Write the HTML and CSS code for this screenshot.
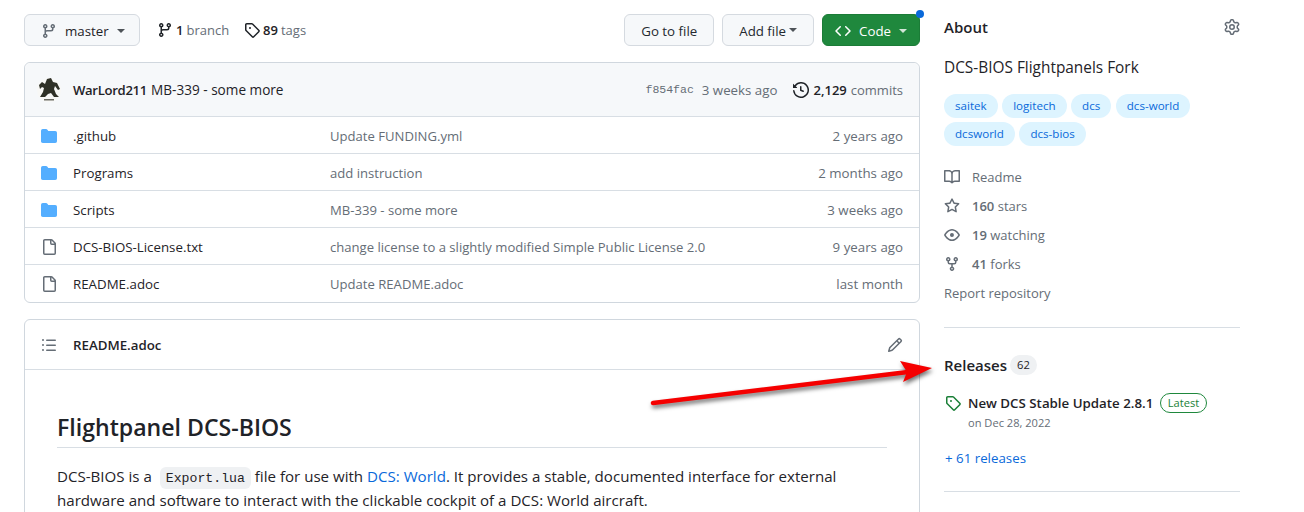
FILE: index.html

```html
<!DOCTYPE html>
<html lang="en">
<head>
    <meta charset="UTF-8">
    <title>DCS-BIOS Flightpanels Fork</title>
    <link rel="stylesheet" href="styles.css">
</head>
<body>
    <svg class="defs" width="0" height="0">
        <symbol id="i-branch" viewBox="0 0 16 16"><path d="M9.5 3.25a2.25 2.25 0 1 1 3 2.122V6A2.5 2.5 0 0 1 10 8.5H6a1 1 0 0 0-1 1v1.128a2.251 2.251 0 1 1-1.5 0V5.372a2.25 2.25 0 1 1 1.5 0v1.836A2.493 2.493 0 0 1 6 7h4a1 1 0 0 0 1-1v-.628A2.25 2.25 0 0 1 9.5 3.25Zm-6 0a.75.75 0 1 0 1.5 0 .75.75 0 0 0-1.5 0Zm8.25-.75a.75.75 0 1 0 0 1.5.75.75 0 0 0 0-1.5ZM4.25 12a.75.75 0 1 0 0 1.5.75.75 0 0 0 0-1.5Z"/></symbol>
        <symbol id="i-tag" viewBox="0 0 16 16"><path d="M1 7.775V2.75C1 1.784 1.784 1 2.75 1h5.025c.464 0 .91.184 1.238.513l6.25 6.25a1.75 1.75 0 0 1 0 2.474l-5.026 5.026a1.75 1.75 0 0 1-2.474 0l-6.25-6.25A1.752 1.752 0 0 1 1 7.775Zm1.5 0c0 .066.026.13.073.177l6.25 6.25a.25.25 0 0 0 .354 0l5.025-5.025a.25.25 0 0 0 0-.354l-6.25-6.25a.25.25 0 0 0-.177-.073H2.75a.25.25 0 0 0-.25.25ZM6 5a1 1 0 1 1 0 2 1 1 0 0 1 0-2Z"/></symbol>
        <symbol id="i-folder" viewBox="0 0 16 16"><path d="M1.75 1A1.75 1.75 0 0 0 0 2.75v10.5C0 14.216.784 15 1.75 15h12.5A1.75 1.75 0 0 0 16 13.25v-8.5A1.75 1.75 0 0 0 14.25 3H7.5a.25.25 0 0 1-.2-.1l-.9-1.2C6.07 1.26 5.55 1 5 1H1.75Z"/></symbol>
        <symbol id="i-file" viewBox="0 0 16 16"><path d="M2 1.75C2 .784 2.784 0 3.75 0h6.586c.464 0 .909.184 1.237.513l2.914 2.914c.329.328.513.773.513 1.237v9.586A1.75 1.75 0 0 1 13.25 16h-9.5A1.75 1.75 0 0 1 2 14.25Zm1.75-.25a.25.25 0 0 0-.25.25v12.5c0 .138.112.25.25.25h9.5a.25.25 0 0 0 .25-.25V6h-2.75A1.75 1.75 0 0 1 9 4.25V1.5Zm6.75.062V4.25c0 .138.112.25.25.25h2.688l-.011-.013-2.914-2.914-.013-.011Z"/></symbol>
    </svg>

    <div class="page">
        <div class="main">
            <div class="topbar">
                <button class="btn branch-btn">
                    <svg class="icon muted-icon"><use href="#i-branch"/></svg>
                    <span class="branch-name">master</span>
                    <span class="caret"></span>
                </button>
                <a class="meta-link"><svg class="icon"><use href="#i-branch"/></svg><b>1</b><span>branch</span></a>
                <a class="meta-link tags-link"><svg class="icon"><use href="#i-tag"/></svg><b>89</b><span>tags</span></a>
                <div class="spacer"></div>
                <button class="btn">Go to file</button>
                <button class="btn">Add file<span class="caret tight"></span></button>
                <button class="btn btn-green">
                    <svg class="icon" viewBox="0 0 16 16"><path d="m11.28 3.22 4.25 4.25a.75.75 0 0 1 0 1.06l-4.25 4.25a.749.749 0 0 1-1.275-.326.749.749 0 0 1 .215-.734L13.94 8l-3.72-3.72a.749.749 0 0 1 .326-1.275.749.749 0 0 1 .734.215Zm-6.56 0a.751.751 0 0 1 1.042.018.751.751 0 0 1 .018 1.042L2.06 8l3.72 3.72a.749.749 0 0 1-.326 1.275.749.749 0 0 1-.734-.215L.47 8.53a.75.75 0 0 1 0-1.06Z"/></svg>
                    <span>Code</span>
                    <span class="caret"></span>
                    <span class="dot"></span>
                </button>
            </div>

            <div class="box files">
                <div class="commit-head">
                    <svg class="avatar" viewBox="0 0 24 26">
                        <circle cx="12" cy="13" r="12" fill="#f8f8f6"/>
                        <path d="M2 8l3-3 3 2 2-5 4-1 2 4 4 1 3 6-2 1-3-4-1 3 2 5 3 3h-5l-3-4-3 1-3 3H3l3-5 1-4-2-1-2 2z" fill="#2f3127"/>
                        <rect x="7" y="22" width="10" height="1.5" fill="#6a6a62"/>
                    </svg>
                    <a class="author">WarLord211</a>
                    <span class="commit-msg">MB-339 - some more</span>
                    <div class="spacer"></div>
                    <code class="sha">f854fac</code>
                    <span class="commit-age">3 weeks ago</span>
                    <a class="commits">
                        <svg class="icon" viewBox="0 0 16 16"><path d="m.427 1.927 1.215 1.215a8.002 8.002 0 1 1-1.6 5.685.75.75 0 1 1 1.493-.154 6.5 6.5 0 1 0 1.18-4.458l1.358 1.358A.25.25 0 0 1 3.896 6H.25A.25.25 0 0 1 0 5.75V2.104a.25.25 0 0 1 .427-.177ZM7.75 4a.75.75 0 0 1 .75.75v2.992l2.028.812a.75.75 0 0 1-.557 1.392l-2.5-1A.751.751 0 0 1 7 8.25v-3.5A.75.75 0 0 1 7.75 4Z"/></svg>
                        <b>2,129</b><span>commits</span>
                    </a>
                </div>
                <div class="row">
                    <svg class="icon folder"><use href="#i-folder"/></svg>
                    <span class="name">.github</span>
                    <span class="msg">Update FUNDING.yml</span>
                    <span class="age">2 years ago</span>
                </div>
                <div class="row">
                    <svg class="icon folder"><use href="#i-folder"/></svg>
                    <span class="name">Programs</span>
                    <span class="msg">add instruction</span>
                    <span class="age">2 months ago</span>
                </div>
                <div class="row">
                    <svg class="icon folder"><use href="#i-folder"/></svg>
                    <span class="name">Scripts</span>
                    <span class="msg">MB-339 - some more</span>
                    <span class="age">3 weeks ago</span>
                </div>
                <div class="row">
                    <svg class="icon file"><use href="#i-file"/></svg>
                    <span class="name">DCS-BIOS-License.txt</span>
                    <span class="msg">change license to a slightly modified Simple Public License 2.0</span>
                    <span class="age">9 years ago</span>
                </div>
                <div class="row">
                    <svg class="icon file"><use href="#i-file"/></svg>
                    <span class="name">README.adoc</span>
                    <span class="msg">Update README.adoc</span>
                    <span class="age">last month</span>
                </div>
            </div>

            <div class="box readme">
                <div class="readme-head">
                    <svg class="icon file" viewBox="0 0 16 16"><path d="M5.75 2.5h8.5a.75.75 0 0 1 0 1.5h-8.5a.75.75 0 0 1 0-1.5Zm0 5h8.5a.75.75 0 0 1 0 1.5h-8.5a.75.75 0 0 1 0-1.5Zm0 5h8.5a.75.75 0 0 1 0 1.5h-8.5a.75.75 0 0 1 0-1.5ZM2 14a1 1 0 1 1 0-2 1 1 0 0 1 0 2Zm1-6a1 1 0 1 1-2 0 1 1 0 0 1 2 0ZM2 4a1 1 0 1 1 0-2 1 1 0 0 1 0 2Z"/></svg>
                    <span class="readme-name">README.adoc</span>
                    <div class="spacer"></div>
                    <svg class="icon file" viewBox="0 0 16 16"><path d="M11.013 1.427a1.75 1.75 0 0 1 2.474 0l1.086 1.086a1.75 1.75 0 0 1 0 2.474l-8.61 8.61c-.21.21-.47.364-.756.445l-3.251.93a.75.75 0 0 1-.927-.928l.929-3.25c.081-.286.235-.547.445-.758l8.61-8.61Zm.176 4.823L9.75 4.81l-6.286 6.287a.253.253 0 0 0-.064.108l-.558 1.953 1.953-.558a.253.253 0 0 0 .108-.064Zm1.238-3.763a.25.25 0 0 0-.354 0L10.811 3.75l1.439 1.44 1.263-1.263a.25.25 0 0 0 0-.354Z"/></svg>
                </div>
                <div class="markdown">
                    <h1>Flightpanel DCS-BIOS</h1>
                    <p>DCS-BIOS is a <code>Export.lua</code> file for use with <a>DCS: World</a>. It provides a stable, documented interface for external hardware and software to interact with the clickable cockpit of a DCS: World aircraft.</p>
                </div>
            </div>
        </div>

        <div class="side">
            <div class="about-head">
                <h2>About</h2>
                <svg class="icon file" viewBox="0 0 16 16"><path d="M8 0a8.2 8.2 0 0 1 .701.031C9.444.095 9.99.645 10.16 1.29l.288 1.107c.018.066.079.158.212.224.231.114.454.243.668.386.123.082.233.09.299.071l1.103-.303c.644-.176 1.392.021 1.82.63.27.385.506.792.704 1.218.315.675.111 1.422-.364 1.891l-.814.806c-.049.048-.098.147-.088.294.016.257.016.515 0 .772-.01.147.038.246.088.294l.814.806c.475.469.679 1.216.364 1.891a7.977 7.977 0 0 1-.704 1.217c-.428.61-1.176.807-1.82.63l-1.102-.302c-.067-.019-.177-.011-.3.071a5.909 5.909 0 0 1-.668.386c-.133.066-.194.158-.211.224l-.29 1.106c-.168.646-.715 1.196-1.458 1.26a8.006 8.006 0 0 1-1.402 0c-.743-.064-1.289-.614-1.458-1.26l-.289-1.106c-.018-.066-.079-.158-.212-.224a5.738 5.738 0 0 1-.668-.386c-.123-.082-.233-.09-.299-.071l-1.103.303c-.644.176-1.392-.021-1.82-.63a8.12 8.12 0 0 1-.704-1.218c-.315-.675-.111-1.422.363-1.891l.815-.806c.05-.048.098-.147.088-.294a6.214 6.214 0 0 1 0-.772c.01-.147-.038-.246-.088-.294l-.815-.806C.635 6.045.431 5.298.746 4.623a7.92 7.92 0 0 1 .704-1.217c.428-.61 1.176-.807 1.82-.63l1.102.302c.067.019.177.011.3-.071.214-.143.437-.272.668-.386.133-.066.194-.158.211-.224l.29-1.106C6.009.645 6.556.095 7.299.03 7.53.01 7.764 0 8 0Zm-.571 1.525c-.036.003-.108.036-.137.146l-.289 1.105c-.147.561-.549.967-.998 1.189-.173.086-.34.183-.5.29-.417.278-.97.423-1.529.27l-1.103-.303c-.109-.03-.175.016-.195.045-.22.312-.412.644-.573.99-.014.031-.021.11.059.19l.815.806c.411.406.562.957.53 1.456a4.709 4.709 0 0 0 0 .582c.032.499-.119 1.05-.53 1.456l-.815.806c-.081.08-.073.159-.059.19.162.346.353.677.573.989.02.03.085.076.195.046l1.102-.303c.56-.153 1.113-.008 1.53.27.161.107.328.204.501.29.447.222.85.629.997 1.189l.289 1.105c.029.109.101.143.137.146a6.6 6.6 0 0 0 1.142 0c.036-.003.108-.036.137-.146l.289-1.105c.147-.561.549-.967.998-1.189.173-.086.34-.183.5-.29.417-.278.97-.423 1.529-.27l1.103.303c.109.029.175-.016.195-.045.22-.313.411-.644.573-.99.014-.031.021-.11-.059-.19l-.815-.806c-.411-.406-.562-.957-.53-1.456a4.709 4.709 0 0 0 0-.582c-.032-.499.119-1.05.53-1.456l.815-.806c.081-.08.073-.159.059-.19a6.464 6.464 0 0 0-.573-.989c-.02-.03-.085-.076-.195-.046l-1.102.303c-.56.153-1.113.008-1.53-.27a4.44 4.44 0 0 0-.501-.29c-.447-.222-.85-.629-.997-1.189l-.289-1.105c-.029-.11-.101-.143-.137-.146a6.6 6.6 0 0 0-1.142 0ZM11 8a3 3 0 1 1-6 0 3 3 0 0 1 6 0ZM9.5 8a1.5 1.5 0 1 0-3.001.001A1.5 1.5 0 0 0 9.5 8Z"/></svg>
            </div>
            <p class="desc">DCS-BIOS Flightpanels Fork</p>
            <div class="topics">
                <a class="topic">saitek</a>
                <a class="topic">logitech</a>
                <a class="topic">dcs</a>
                <a class="topic">dcs-world</a>
                <a class="topic">dcsworld</a>
                <a class="topic">dcs-bios</a>
            </div>
            <ul class="stats">
                <li><svg class="icon file" viewBox="0 0 16 16"><path d="M0 1.75A.75.75 0 0 1 .75 1h4.253c1.227 0 2.317.59 3 1.501A3.743 3.743 0 0 1 11.006 1h4.245a.75.75 0 0 1 .75.75v10.5a.75.75 0 0 1-.75.75h-4.507a2.25 2.25 0 0 0-1.591.659l-.622.621a.75.75 0 0 1-1.06 0l-.622-.621A2.25 2.25 0 0 0 5.258 13H.75a.75.75 0 0 1-.75-.75Zm7.251 10.324.004-5.073-.002-2.253A2.25 2.25 0 0 0 5.003 2.5H1.5v9h3.757a3.75 3.75 0 0 1 1.994.574ZM8.755 4.75l-.004 7.322a3.752 3.752 0 0 1 1.992-.572H14.5v-9h-3.495a2.25 2.25 0 0 0-2.25 2.25Z"/></svg>Readme</li>
                <li><svg class="icon file" viewBox="0 0 16 16"><path d="M8 .25a.75.75 0 0 1 .673.418l1.882 3.815 4.21.612a.75.75 0 0 1 .416 1.279l-3.046 2.97.719 4.192a.751.751 0 0 1-1.088.791L8 12.347l-3.766 1.98a.75.75 0 0 1-1.088-.79l.72-4.194L.818 6.374a.75.75 0 0 1 .416-1.28l4.21-.611L7.327.668A.75.75 0 0 1 8 .25Zm0 2.445L6.615 5.5a.75.75 0 0 1-.564.41l-3.097.45 2.24 2.184a.75.75 0 0 1 .216.664l-.528 3.084 2.769-1.456a.75.75 0 0 1 .698 0l2.77 1.456-.53-3.084a.75.75 0 0 1 .216-.664l2.24-2.183-3.096-.45a.75.75 0 0 1-.564-.41L8 2.694Z"/></svg><span><b>160</b> stars</span></li>
                <li><svg class="icon file" viewBox="0 0 16 16"><path d="M8 2c1.981 0 3.671.992 4.933 2.078 1.27 1.091 2.187 2.345 2.637 3.023a1.62 1.62 0 0 1 0 1.798c-.45.678-1.367 1.932-2.637 3.023C11.67 13.008 9.981 14 8 14c-1.981 0-3.671-.992-4.933-2.078C1.797 10.83.88 9.576.43 8.898a1.62 1.62 0 0 1 0-1.798c.45-.677 1.367-1.931 2.637-3.022C4.33 2.992 6.019 2 8 2ZM1.679 7.932a.12.12 0 0 0 0 .136c.411.622 1.241 1.75 2.366 2.717C5.176 11.758 6.527 12.5 8 12.5c1.473 0 2.825-.742 3.955-1.715 1.124-.967 1.954-2.096 2.366-2.717a.12.12 0 0 0 0-.136c-.412-.621-1.242-1.75-2.366-2.717C10.824 4.242 9.473 3.5 8 3.5c-1.473 0-2.825.742-3.955 1.715-1.124.967-1.954 2.096-2.366 2.717ZM8 10a2 2 0 1 1-.001-3.999A2 2 0 0 1 8 10Z"/></svg><span><b>19</b> watching</span></li>
                <li><svg class="icon file" viewBox="0 0 16 16"><path d="M5 5.372v.878c0 .414.336.75.75.75h4.5a.75.75 0 0 0 .75-.75v-.878a2.25 2.25 0 1 1 1.5 0v.878a2.25 2.25 0 0 1-2.25 2.25h-1.5v2.128a2.251 2.251 0 1 1-1.5 0V8.5h-1.5A2.25 2.25 0 0 1 3.5 6.25v-.878a2.25 2.25 0 1 1 1.5 0ZM5 3.25a.75.75 0 1 0-1.5 0 .75.75 0 0 0 1.5 0Zm6.75.75a.75.75 0 1 0 0-1.5.75.75 0 0 0 0 1.5Zm-3 8.75a.75.75 0 1 0-1.5 0 .75.75 0 0 0 1.5 0Z"/></svg><span><b>41</b> forks</span></li>
                <li class="report">Report repository</li>
            </ul>
            <hr>
            <div class="releases-head"><h2>Releases</h2><span class="counter">62</span></div>
            <div class="release">
                <svg class="icon release-tag"><use href="#i-tag"/></svg>
                <div>
                    <div class="release-title"><span>New DCS Stable Update 2.8.1</span><span class="label">Latest</span></div>
                    <div class="release-date">on Dec 28, 2022</div>
                </div>
            </div>
            <a class="more">+ 61 releases</a>
            <hr class="last">
        </div>
    </div>

    <!-- red annotation arrow drawn on the screenshot -->
    <svg class="arrow" width="300" height="60" viewBox="0 0 300 60">
        <path d="M3 51 L258 20" stroke="#f50000" stroke-width="4.5" stroke-linecap="round" fill="none"/>
        <path d="M250 9 L282 16 L253 30 L257 20 Z" fill="#f50000"/>
    </svg>
</body>
</html>
```

FILE: styles.css

```css
html, body { margin: 0; height: 512px; overflow: hidden; background: #fff; }
body { font-family: "Open Sans", sans-serif; font-size: 13.3px; color: #1f2328; position: relative; }
.defs { position: absolute; }
.icon { width: 16px; height: 16px; fill: currentColor; flex: none; }
.spacer { flex: 1; }
b { font-weight: 600; }

.page { display: flex; gap: 24px; padding: 14px 64px 0 24px; }
.main { width: 896px; flex: none; }
.side { width: 296px; flex: none; }

.topbar { display: flex; align-items: center; height: 32px; margin-bottom: 16px; }
.btn { display: inline-flex; align-items: center; height: 32px; padding: 1px 16px 0; margin-left: 8px; font: inherit; color: #24292f; background: #f6f8fa; border: 1px solid #d5dae0; border-radius: 6px; position: relative; }
.branch-btn { margin-left: 0; width: 116px; }
.branch-name { margin: 0 8px; color: #1f2328; }
.muted-icon { color: #656d76; }
.caret { display: inline-block; border: 4px solid transparent; border-top-color: currentColor; border-bottom: 0; opacity: 0.8; }
.caret.tight { margin-left: 3px; transform: translateY(-1px); }
.btn-green { background: #1f883d; border-color: #1b7c37; color: #fff; padding: 1px 12px 0; }
.btn-green .icon { margin-right: 8px; }
.btn-green .caret { margin-left: 8px; }
.dot { position: absolute; top: -5px; right: -5px; width: 8px; height: 8px; background: #0969da; border-radius: 50%; }

.meta-link { display: inline-flex; align-items: center; margin-left: 17px; color: #656d76; margin-top: -1px; font-size: 13px; }
.meta-link.tags-link { margin-left: 15px; }
.meta-link .icon { color: #1f2328; margin-right: 3px; }
.meta-link b { color: #1f2328; margin-right: 3px; }

.box { border: 1px solid #d0d7de; border-radius: 6px; }
.files { margin-bottom: 16px; }
.commit-head { display: flex; align-items: center; height: 53px; padding: 0 16px 0 12px; background: #f6f8fa; border-radius: 6px 6px 0 0; }
.avatar { width: 24px; height: 26px; margin-right: 12px; }
.author { font-weight: 600; font-size: 13.1px; letter-spacing: -0.3px; margin-right: 4px; }
.commit-msg { font-size: 13.6px; }
.sha { font-family: "Liberation Mono", monospace; font-size: 11.5px; color: #656d76; margin-right: 8px; }
.commit-age { color: #656d76; }
.commits { display: inline-flex; align-items: center; margin-left: 16px; color: #656d76; font-size: 13px; }
.commits .icon { color: #1f2328; margin-right: 4px; }
.commits b { color: #1f2328; margin-right: 4px; }

.row { display: flex; align-items: center; height: 35px; padding: 1px 16px 0; border-top: 1px solid #d8dee4; }
.row:last-child { height: 36px; }
.row .icon { margin-right: 16px; }
.folder { color: #54aeff; }
.file { color: #656d76; }
.name { width: 257px; flex: none; }
.msg { flex: 1; color: #656d76; font-size: 13.1px; }
.age { color: #656d76; }

.readme { height: 400px; }
.readme-head { display: flex; align-items: center; height: 48px; padding: 1px 16px 0; border-bottom: 1px solid #d8dee4; }
.readme-name { margin-left: 16px; font-weight: 600; }
.markdown { padding: 42px 32px 0; font-size: 15.1px; line-height: 24px; }
.markdown h1 { margin: 0 0 16px; padding-bottom: 5px; font-size: 23.1px; line-height: 30px; font-weight: 600; border-bottom: 1px solid #d8dee4; }
.markdown p { margin: 0; }
.markdown a { color: #0969da; }
.markdown code { padding: 3.5px 6px; margin: 0 0 0 4px; background: #eff1f3; border-radius: 6px; font-family: "Liberation Mono", monospace; font-size: 13.2px; line-height: 1; vertical-align: 1px; }

.side h2 { margin: 0; font-size: 15px; font-weight: 600; }
.about-head { display: flex; justify-content: space-between; align-items: center; height: 26px; }
.desc { margin: 16px 0 0; font-size: 15.4px; line-height: 24px; }
.topics { display: flex; flex-wrap: wrap; gap: 4px 4.5px; margin-top: 14px; }
.topic { height: 24px; line-height: 24px; padding: 0 11px; background: #ddf4ff; color: #0969da; font-size: 11.6px; font-weight: 500; border-radius: 12px; }
.stats { list-style: none; margin: 16px 0 0; padding: 0; color: #656d76; font-size: 13px; }
.stats li { display: flex; align-items: center; height: 29px; }
.stats .icon { margin-right: 12px; }
hr { margin: 20px 0 0; height: 1px; border: 0; background: #d8dee4; }
.releases-head { display: flex; align-items: center; margin-top: 26px; height: 22px; }
.counter { margin-left: 3px; padding: 0 7px; height: 20px; line-height: 20px; font-size: 11.2px; background: #eff1f3; border-radius: 10px; }
.release { display: flex; margin-top: 17px; }
.release-tag { color: #1a7f37; margin: 2px 7px 0 1px; }
.release-title { display: flex; align-items: center; font-weight: 600; }
.label { margin-left: 7px; padding: 0 6.5px; height: 18px; line-height: 18px; border: 1px solid #1f883d; border-radius: 10px; color: #1a7f37; font-size: 11.1px; font-weight: 500; }
.release-date { font-size: 11.1px; color: #656d76; margin-top: 2px; }
.more { display: block; margin-top: 19px; margin-left: 1px; color: #0969da; }
hr.last { margin-top: 24px; }

.arrow { position: absolute; left: 650px; top: 352px; filter: drop-shadow(1px 3px 2px rgba(0,0,0,0.55)); }
```
